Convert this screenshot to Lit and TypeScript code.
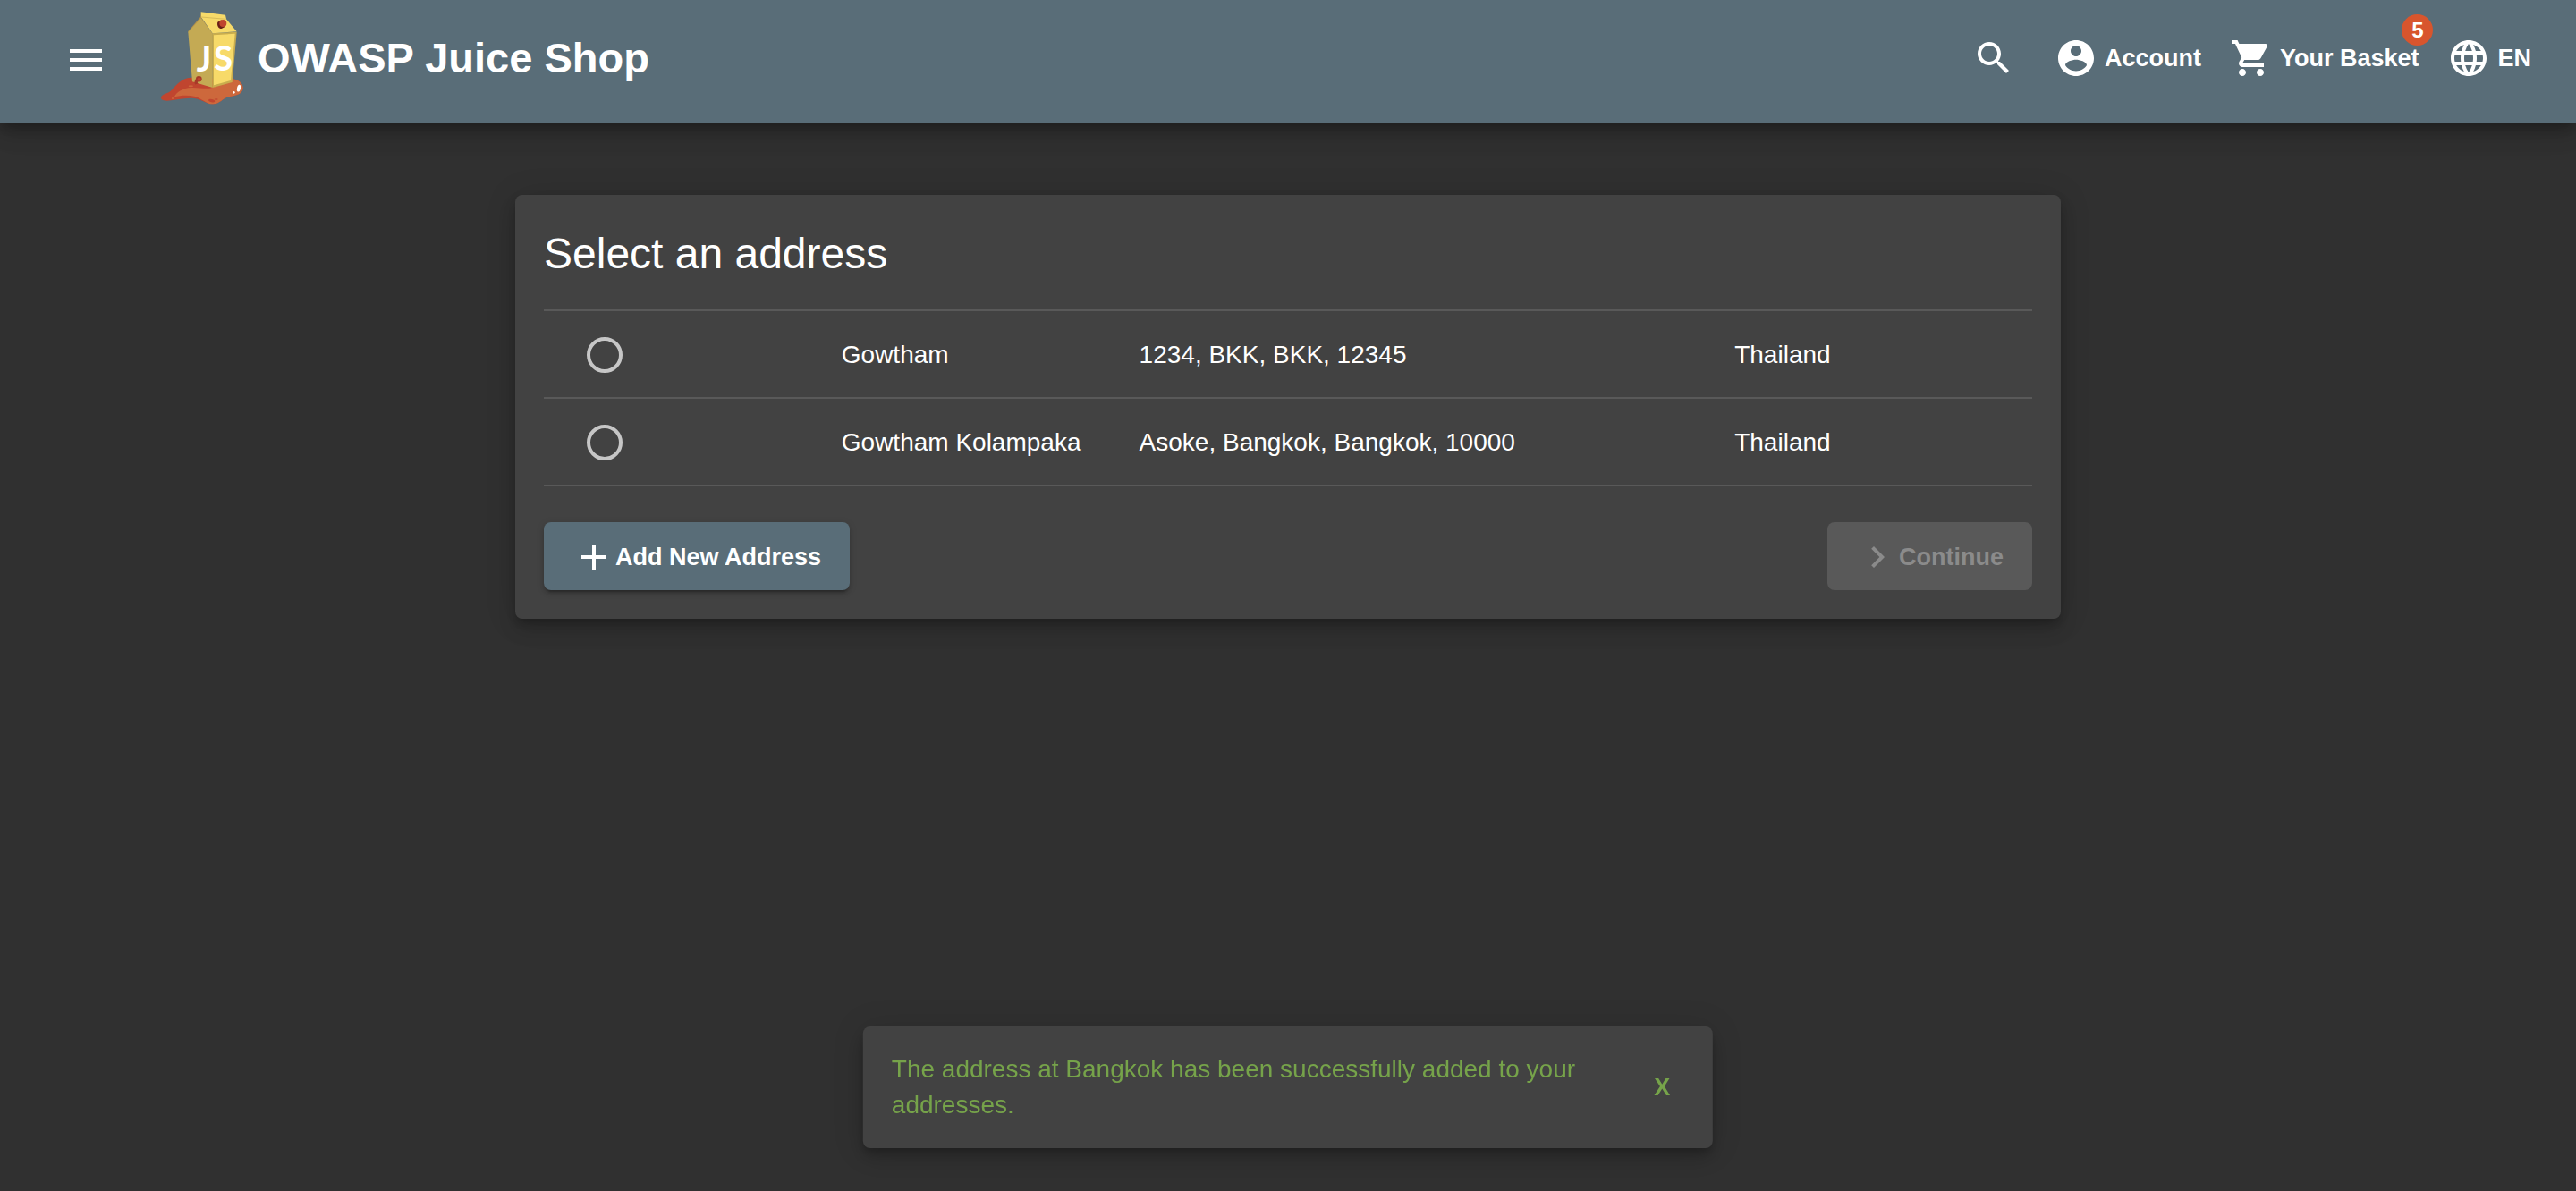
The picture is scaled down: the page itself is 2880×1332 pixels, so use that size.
import { LitElement, html, css, svg } from "lit";
import { customElement, property, state } from "lit/decorators.js";

const ICONS: Record<string, string> = {
  menu: "M3 18h18v-2H3v2zm0-5h18v-2H3v2zm0-7v2h18V6H3z",
  search:
    "M15.5 14h-.79l-.28-.27C15.41 12.59 16 11.11 16 9.5 16 5.91 13.09 3 9.5 3S3 5.91 3 9.5 5.91 16 9.5 16c1.61 0 3.09-.59 4.23-1.57l.27.28v.79l5 4.99L20.49 19l-4.99-5zm-6 0C7.01 14 5 11.99 5 9.5S7.01 5 9.5 5 14 7.01 14 9.5 11.99 14 9.5 14z",
  account:
    "M12 2C6.48 2 2 6.48 2 12s4.48 10 10 10 10-4.48 10-10S17.52 2 12 2zm0 3c1.66 0 3 1.34 3 3s-1.34 3-3 3-3-1.34-3-3 1.34-3 3-3zm0 14.2c-2.5 0-4.71-1.28-6-3.22.03-1.99 4-3.08 6-3.08 1.99 0 5.97 1.09 6 3.08-1.29 1.94-3.5 3.22-6 3.22z",
  cart:
    "M7 18c-1.1 0-1.99.9-1.99 2S5.9 22 7 22s2-.9 2-2-.9-2-2-2zM1 2v2h2l3.6 7.59-1.35 2.45c-.16.28-.25.61-.25.96 0 1.1.9 2 2 2h12v-2H7.42c-.14 0-.25-.11-.25-.25l.03-.12.9-1.63h7.45c.75 0 1.41-.41 1.75-1.03l3.58-6.49c.08-.14.12-.31.12-.48 0-.55-.45-1-1-1H5.21l-.94-2H1zm16 16c-1.1 0-1.99.9-1.99 2s.89 2 1.99 2 2-.9 2-2-.9-2-2-2z",
  language:
    "M11.99 2C6.47 2 2 6.48 2 12s4.47 10 9.99 10C17.52 22 22 17.52 22 12S17.52 2 11.99 2zm6.93 6h-2.95c-.32-1.25-.78-2.45-1.38-3.56 1.84.63 3.37 1.91 4.33 3.56zM12 4.04c.83 1.2 1.48 2.53 1.91 3.96h-3.82c.43-1.43 1.08-2.76 1.91-3.96zM4.26 14C4.1 13.36 4 12.69 4 12s.1-1.36.26-2h3.38c-.08.66-.14 1.32-.14 2 0 .68.06 1.34.14 2H4.26zm.82 2h2.95c.32 1.25.78 2.45 1.38 3.56-1.84-.63-3.37-1.9-4.33-3.56zm2.95-8H5.08c.96-1.66 2.49-2.93 4.33-3.56C8.81 5.55 8.35 6.75 8.03 8zM12 19.96c-.83-1.2-1.48-2.53-1.91-3.96h3.82c-.43 1.43-1.08 2.76-1.91 3.96zM14.34 14H9.66c-.09-.66-.16-1.32-.16-2 0-.68.07-1.35.16-2h4.68c.09.65.16 1.32.16 2 0 .68-.07 1.34-.16 2zm.25 5.56c.6-1.11 1.06-2.31 1.38-3.56h2.95c-.96 1.65-2.49 2.93-4.33 3.56zM16.36 14c.08-.66.14-1.32.14-2 0-.68-.06-1.34-.14-2h3.38c.16.64.26 1.31.26 2s-.1 1.36-.26 2h-3.38z",
  add: "M19 13h-6v6h-2v-6H5v-2h6V5h2v6h6v2z",
  chevron: "M10 6L8.59 7.41 13.17 12l-4.58 4.59L10 18l6-6z",
};

@customElement("app-icon")
export class AppIcon extends LitElement {
  static styles = css`
    :host {
      display: block;
      flex: none;
      width: 48px;
      height: 48px;
    }
    .glyph {
      display: block;
      width: 100%;
      height: 100%;
      fill: currentColor;
    }
  `;

  @property() name = "menu";

  render() {
    return html`<svg class="glyph" viewBox="0 0 24 24" aria-hidden="true">
      ${svg`<path d=${ICONS[this.name]}></path>`}
    </svg>`;
  }
}

@customElement("juice-logo")
export class JuiceLogo extends LitElement {
  static styles = css`
    :host {
      display: block;
      flex: none;
    }
    .art {
      display: block;
      width: 92px;
      height: 104px;
    }
    .letter {
      fill: #fff;
      font-family: Lato, "Liberation Sans", sans-serif;
      font-weight: 700;
      font-size: 116px;
    }
  `;

  render() {
    return html`<svg class="art" viewBox="30 36 276 312" aria-hidden="true">
      <path fill="#c0452f" d="M30 325C32 310 52 314 66 299C82 280 100 259 130 257L270 262C292 264 306 278 305 295C300 315 280 318 255 322C236 328 228 345 205 346C180 347 170 330 140 327C110 324 80 334 50 335C38 335 30 332 30 325Z"/>
      <path fill="#cd683c" d="M75 322C80 308 102 292 132 291C160 290 178 297 203 291L270 262C292 264 306 278 305 295C301 315 280 318 255 322C236 328 228 345 205 346C180 347 172 328 142 320C116 315 92 318 75 322Z"/>
      <ellipse cx="130" cy="286" rx="8" ry="3" fill="#cd683c"/>
      <circle cx="69" cy="327" r="3" fill="#cd683c"/>
      <ellipse cx="200" cy="335" rx="11" ry="5" fill="#c0452f" transform="rotate(14 200 335)"/>
      <ellipse cx="215" cy="330" rx="6" ry="2" fill="#c0452f"/>
      <ellipse cx="291" cy="293" rx="6" ry="12" fill="#fff" transform="rotate(12 291 293)"/>
      <circle cx="274" cy="307" r="4" fill="#fff"/>
      <path fill="#b3924a" d="M163 38L165 56L203 110L121 106V102L162 54Z"/>
      <path fill="#c4aa54" d="M121 105L164 58L203 110V291L135 271Z"/>
      <path fill="#c9ad4e" d="M202 109L284 104L269 273L203 291Z"/>
      <path fill="#f7da69" d="M207 115L278 110L264 267L207 283Z"/>
      <path fill="#f7da69" d="M164 37L246 47L249 61L284 103L203 109L165 55Z"/>
      <path fill="none" stroke="#d8bc58" stroke-width="3" d="M165 54L248 61"/>
      <path fill="#6a2018" d="M220 71L232 64L246 86L233 93C222 93 217 82 220 71Z"/>
      <ellipse cx="238" cy="75" rx="12" ry="12" fill="#c0452f"/>
      <path fill="none" stroke="#a63a28" stroke-width="10" d="M149 279C145 268 150 262 158 262"/>
      <circle cx="157" cy="262" r="10" fill="#a63a28"/>
      <circle cx="158" cy="263" r="6" fill="#c0452f"/>
      <text class="letter" x="149" y="236">J</text>
      <text class="letter" x="207" y="234">S</text>
    </svg>`;
  }
}

interface Address {
  name: string;
  address: string;
  country: string;
}

@customElement("app-root")
export class AppRoot extends LitElement {
  static styles = css`
    :host {
      display: flex;
      flex-direction: column;
      min-height: 100vh;
      background: #303030;
      color: #fff;
      font-family: "Liberation Sans", Arial, sans-serif;
      font-size: 28px;
      line-height: 40px;
      --primary: #596d78;
      --surface: #424242;
      --raised: 0 6px 10px -2px rgba(0, 0, 0, 0.2),
        0 12px 20px 0 rgba(0, 0, 0, 0.14), 0 2px 36px 0 rgba(0, 0, 0, 0.12);
    }
    * {
      box-sizing: border-box;
    }
    button {
      margin: 0;
      border: 0;
      background: none;
      color: inherit;
      font: inherit;
      font-size: 27px;
      font-weight: 700;
      cursor: pointer;
    }
    .toolbar {
      display: flex;
      align-items: center;
      height: 138px;
      padding: 0 34px 8px 56px;
      background: var(--primary);
      box-shadow: var(--raised);
    }
    .tool {
      position: relative;
      display: flex;
      align-items: center;
      gap: 8px;
      height: 80px;
      padding: 0 16px;
      white-space: nowrap;
    }
    .brand {
      display: flex;
      align-items: center;
      gap: 16px;
      margin-left: 44px;
      color: inherit;
      font-size: 47px;
      font-weight: 700;
      line-height: 56px;
      text-decoration: none;
      white-space: nowrap;
    }
    .spacer {
      flex: 1;
    }
    .menu {
      padding-top: 4px;
    }
    .search {
      margin-right: 12px;
    }
    .badge {
      position: absolute;
      top: -9px;
      right: 0;
      width: 35px;
      height: 35px;
      border-radius: 50%;
      background: #d8552d;
      font-size: 24px;
      line-height: 35px;
      text-align: center;
    }
    .content {
      flex: 1;
      padding: 80px 0 32px;
    }
    .card {
      width: 60%;
      margin: 0 auto;
      padding: 32px;
      border-radius: 8px;
      background: var(--surface);
      box-shadow: var(--raised);
    }
    .title {
      margin: 0 0 28px;
      font-size: 48px;
      font-weight: 400;
      line-height: 68px;
    }
    .addresses {
      width: 100%;
      table-layout: fixed;
      border-collapse: separate;
      border-spacing: 0;
      border-top: 2px solid #595959;
    }
    .cell {
      width: 20%;
      height: 98px;
      padding: 2px 0 0;
      border-bottom: 2px solid #595959;
      text-align: left;
    }
    .wide {
      width: 40%;
    }
    .choice {
      padding-left: 48px;
    }
    .radio {
      display: block;
      width: 40px;
      height: 40px;
      margin: 0;
      border: 4px solid #c6c6c6;
      border-radius: 50%;
      appearance: none;
      cursor: pointer;
    }
    .radio:checked {
      border-color: var(--primary);
      background: radial-gradient(var(--primary) 50%, transparent 55%);
    }
    .actions {
      display: flex;
      justify-content: space-between;
      align-items: center;
      margin-top: 40px;
    }
    .action {
      display: flex;
      align-items: center;
      height: 76px;
      padding: 2px 32px 0;
      border-radius: 8px;
      white-space: nowrap;
    }
    .add {
      background: var(--primary);
      box-shadow: 0 6px 2px -4px rgba(0, 0, 0, 0.2),
        0 4px 4px 0 rgba(0, 0, 0, 0.14), 0 2px 10px 0 rgba(0, 0, 0, 0.12);
    }
    .next:disabled {
      background: #595959;
      color: #8b8b8b;
      cursor: default;
    }
    .snackbar {
      position: fixed;
      bottom: 48px;
      left: 50%;
      display: flex;
      align-items: center;
      width: 33%;
      min-width: 600px;
      padding: 28px 32px;
      border-radius: 8px;
      background: var(--surface);
      box-shadow: var(--raised);
      color: #76a34a;
      transform: translateX(-50%);
    }
    .message {
      flex: 1;
      margin: 0;
    }
    .dismiss {
      width: 82px;
      height: 72px;
      margin-left: 16px;
      margin-right: -16px;
      padding: 0;
    }
  `;

  @state() private selected = -1;
  @state() private notice = true;

  private addresses: Address[] = [
    { name: "Gowtham", address: "1234, BKK, BKK, 12345", country: "Thailand" },
    {
      name: "Gowtham Kolampaka",
      address: "Asoke, Bangkok, Bangkok, 10000",
      country: "Thailand",
    },
  ];

  render() {
    return html`
      <header class="toolbar">
        <button class="tool menu" aria-label="Open menu"><app-icon name="menu"></app-icon></button>
        <a class="brand" href="#/search"><juice-logo></juice-logo><span>OWASP Juice Shop</span></a>
        <span class="spacer"></span>
        <button class="tool search" aria-label="Search"><app-icon name="search"></app-icon></button>
        <button class="tool"><app-icon name="account"></app-icon><span>Account</span></button>
        <button class="tool">
          <app-icon name="cart"></app-icon><span>Your Basket</span><span class="badge">5</span>
        </button>
        <button class="tool"><app-icon name="language"></app-icon><span>EN</span></button>
      </header>
      <main class="content">
        <section class="card">
          <h1 class="title">Select an address</h1>
          <table class="addresses">
            <tbody>
              ${this.addresses.map(
                (a, i) => html`<tr>
                  <td class="cell choice">
                    <input
                      class="radio"
                      type="radio"
                      name="address"
                      aria-labelledby="name-${i}"
                      .checked=${this.selected === i}
                      @change=${() => (this.selected = i)}
                    />
                  </td>
                  <td class="cell" id="name-${i}">${a.name}</td>
                  <td class="cell wide">${a.address}</td>
                  <td class="cell">${a.country}</td>
                </tr>`
              )}
            </tbody>
          </table>
          <div class="actions">
            <button class="action add"><app-icon name="add"></app-icon><span>Add New Address</span></button>
            <button class="action next" ?disabled=${this.selected < 0}>
              <app-icon name="chevron"></app-icon><span>Continue</span>
            </button>
          </div>
        </section>
      </main>
      ${this.notice
        ? html`<div class="snackbar" role="status">
            <p class="message">The address at Bangkok has been successfully added to your addresses.</p>
            <button class="dismiss" @click=${() => (this.notice = false)}>X</button>
          </div>`
        : null}
    `;
  }
}
